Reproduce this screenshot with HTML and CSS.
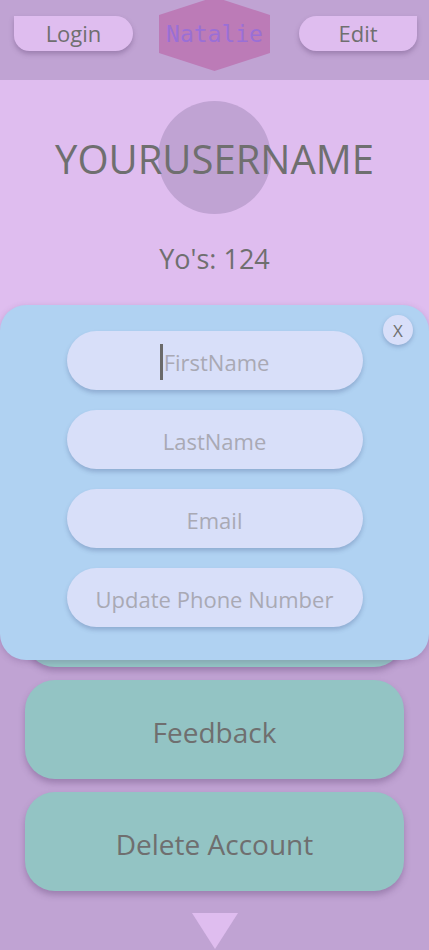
FILE: index.html
```html
<!DOCTYPE html>
<html>
<head>
<meta charset="utf-8">
<link rel="stylesheet" href="styles.css">
</head>
<body>
<div class="page">
  <header class="topbar">
    <button class="top-btn login">Login</button>
    <div class="logo">
      <svg class="hex" viewBox="0 0 111 74" width="111" height="74"><polygon points="55.5,0 111,18 111,56 55.5,74 0,56 0,18" fill="#bc7bb7"/></svg>
      <span class="logo-text">Natalie</span>
    </div>
    <button class="top-btn edit">Edit</button>
  </header>
  <section class="profile">
    <div class="avatar-wrap">
      <div class="avatar"></div>
      <h1 class="username">YOURUSERNAME</h1>
    </div>
    <p class="yos">Yo's: 124</p>
  </section>
  <section class="actions">
    <div class="action" aria-hidden="true"></div>
    <div class="action" aria-hidden="true"></div>
    <div class="action" aria-hidden="true"></div>
    <button class="action">Feedback</button>
    <button class="action">Delete Account</button>
    <div class="more"></div>
  </section>
  <div class="panel">
    <button class="close">X</button>
    <div class="field"><span class="caret"></span><span class="ph">FirstName</span></div>
    <div class="field"><span class="ph">LastName</span></div>
    <div class="field"><span class="ph">Email</span></div>
    <div class="field"><span class="ph">Update Phone Number</span></div>
  </div>
</div>
</body>
</html>
```

FILE: styles.css
```css
* { box-sizing: border-box; }
html, body { margin: 0; padding: 0; }
body {
  background: #c0a3d3;
  font-family: "Open Sans", "Noto Sans", sans-serif;
  color: #6f6f6f;
  overflow: hidden;
}
.page { position: relative; width: 429px; }
button { font-family: inherit; border: none; cursor: pointer; }

.topbar {
  height: 80px;
  display: flex;
  justify-content: space-between;
  align-items: flex-start;
  padding: 16px 12px 0 14px;
  position: relative;
}
.top-btn {
  width: 119px;
  height: 35px;
  background: #dfbdef;
  color: #6f6f6f;
  font-size: 22px;
  line-height: 35px;
  padding: 0;
  box-shadow: 0 3px 5px rgba(90, 60, 110, 0.35);
}
.login { border-radius: 0 18px 18px 16px; }
.edit { width: 118px; border-radius: 18px 0 16px 18px; }
.logo {
  position: absolute;
  left: 159px;
  top: -3px;
  width: 111px;
  height: 74px;
  display: flex;
  align-items: center;
  justify-content: center;
}
.hex { position: absolute; left: 0; top: 0; }
.logo-text {
  position: relative;
  font-family: "DejaVu Sans Mono", monospace;
  font-size: 23px;
  color: #9a6fd6;
}

.profile {
  background: #dfbdef;
  height: 251px;
  display: flex;
  flex-direction: column;
  align-items: center;
  padding-top: 21px;
}
.avatar-wrap {
  position: relative;
  width: 429px;
  height: 113px;
  display: flex;
  justify-content: center;
  align-items: center;
}
.avatar {
  width: 113px;
  height: 113px;
  border-radius: 50%;
  background: #c0a3d3;
}
.username {
  position: absolute;
  margin: 2px 0 0;
  font-weight: 400;
  font-size: 40px;
  color: #6f6f6f;
}
.yos {
  margin: 26px 0 0;
  font-size: 27px;
}

.actions {
  display: flex;
  flex-direction: column;
  gap: 13px;
  padding: 13px 25px 0;
}
.action {
  height: 99px;
  border-radius: 30px;
  background: #93c4c4;
  color: #6f6f6f;
  font-size: 28px;
  padding: 4px 0 0;
  box-shadow: 0 4px 6px rgba(90, 60, 110, 0.35);
}
.more {
  align-self: center;
  width: 0; height: 0;
  margin-top: 9px;
  border-left: 23px solid transparent;
  border-right: 23px solid transparent;
  border-top: 36px solid #dfbdef;
}

.panel {
  position: absolute;
  left: 0;
  top: 305px;
  width: 429px;
  height: 355px;
  background: #b0d2f2;
  border-radius: 26px;
  display: flex;
  flex-direction: column;
  align-items: center;
  gap: 20px;
  padding-top: 26px;
  box-shadow: 0 2px 6px rgba(90, 60, 110, 0.25);
}
.close {
  position: absolute;
  right: 16px;
  top: 10px;
  width: 30px;
  height: 30px;
  border-radius: 50%;
  background: #d8dff9;
  color: #6f6f6f;
  font-size: 17px;
  padding: 0;
  box-shadow: 0 2px 4px rgba(70, 90, 140, 0.35);
}
.field {
  width: 296px;
  height: 59px;
  border-radius: 30px;
  background: #d8dff9;
  display: flex;
  align-items: center;
  justify-content: center;
  padding-top: 2px;
  box-shadow: 0 3px 4px rgba(70, 90, 140, 0.3);
}
.ph { color: #a9a9b4; font-size: 22px; }
.caret {
  width: 3px;
  height: 36px;
  background: #6a6a6a;
  margin-right: 1px;
}
```
